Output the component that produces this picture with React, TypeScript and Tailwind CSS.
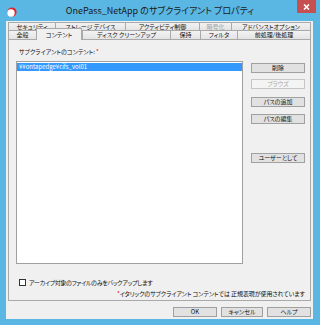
import React from "react";

const FONT = "font-['Noto_Sans_CJK_JP',sans-serif] [font-feature-settings:'palt']";

function Tab({ w, label, disabled, selected, last }: { w: number; label: string; disabled?: boolean; selected?: boolean; last?: boolean }) {
  const base =
    "flex items-center justify-center text-[6px] leading-none border-t border-l border-[#a9a9a9] whitespace-nowrap overflow-hidden";
  const cls = selected
    ? `${base} relative z-10 -mt-[2px] -mb-[1px] bg-[#f0f0f0] border-r`
    : `${base} bg-gradient-to-b from-[#f2f2f2] to-[#e4e4e4] ${last ? "border-r" : ""}`;
  return (
    <div className={cls} style={{ width: w }}>
      <span className={disabled ? "text-[#a3a3a3]" : "text-[#111]"}>{label}</span>
    </div>
  );
}

function Btn({ label, disabled, className = "" }: { label: string; disabled?: boolean; className?: string }) {
  return (
    <div
      className={`h-[10px] flex items-center justify-center text-[6px] leading-none border ${
        disabled ? "bg-[#f4f4f4] border-[#c6c6c6] text-[#a8a8a8]" : "bg-[#e1e1e1] border-[#a0a0a0] text-[#111]"
      } ${className}`}
    >
      {label}
    </div>
  );
}

export default function App() {
  return (
    <div className={`w-[320px] h-[325px] bg-[#5ab6e2] flex flex-col ${FONT}`}>
      {/* title bar */}
      <div className="h-[21px] flex items-start">
        <div className="w-[24px] h-[21px] flex items-center pl-[7px] pt-[3px]">
          <svg width="10" height="10" viewBox="0 0 10 10">
            <circle cx="5" cy="5" r="4.6" fill="#e0262b" />
            <circle cx="4" cy="6" r="3.7" fill="#ffffff" />
          </svg>
        </div>
        <div className="flex-1 h-[21px] flex items-center justify-center text-[9px] leading-none text-[#1a1a1a] whitespace-nowrap">
          OnePass_NetApp のサブクライアント プロパティ
        </div>
        <div className="w-[24px] flex">
          <div className="w-[19px] h-[13px] bg-[#c74f4f] flex items-center justify-center ml-[1px]">
            <svg width="7" height="6" viewBox="0 0 7 6">
              <path d="M1 0.5 L6 5.5 M6 0.5 L1 5.5" stroke="#fff" strokeWidth="1.6" />
            </svg>
          </div>
        </div>
      </div>

      {/* body */}
      <div className="flex-1 ml-[6px] mr-[7px] mb-[6px] bg-[#f0f0f0] flex flex-col pl-[2px] pr-[2px] pt-[1px]">
        {/* tab row 1 */}
        <div className="flex h-[8px]">
          <Tab w={47} label="セキュリティ" />
          <Tab w={70} label="ストレージ デバイス" />
          <Tab w={74} label="アクティビティ制御" />
          <Tab w={32} label="暗号化" disabled />
          <Tab w={80} label="アドバンストオプション" last />
        </div>
        {/* tab row 2 */}
        <div className="flex h-[9px]">
          <Tab w={28} label="全般" />
          <Tab w={46} label="コンテント" selected />
          <Tab w={88} label="ディスク クリーンアップ" />
          <Tab w={30} label="保持" />
          <Tab w={37} label="フィルタ" />
          <Tab w={74} label="前処理/後処理" last />
        </div>

        {/* panel */}
        <div className="h-[262px] border border-[#a9a9a9] bg-[#f0f0f0] flex flex-col pl-[7px] pr-[5px] pt-[7px]">
          <div className="h-[10px] flex items-center ml-[3px] text-[6px] leading-none text-[#111] whitespace-nowrap">
            サブクライアントのコンテント:<span className="text-[#e0141e] ml-[1px]">*</span>
          </div>
          <div className="mt-[4px] flex">
            <div className="w-[227px] h-[203px] bg-white border border-[#a0a0a0] pt-[1px]">
              <div className="h-[8px] bg-[#3399ff] text-white text-[6px] leading-none flex items-center pl-[2px] whitespace-nowrap">
                ¥¥ontapedge¥cifs_vol01
              </div>
            </div>
            <div className="ml-[8px] w-[54px] flex flex-col pt-[2px]">
              <Btn label="削除" />
              <Btn label="ブラウズ" disabled className="mt-[6px]" />
              <Btn label="パスの追加" className="mt-[8px]" />
              <Btn label="パスの編集" className="mt-[7px]" />
              <Btn label="ユーザーとして" className="mt-[29px]" />
            </div>
          </div>
          <div className="mt-[14px] h-[9px] flex items-center ml-[3px]">
            <div className="w-[7px] h-[7px] border border-[#333] bg-white" />
            <span className="ml-[3px] text-[6px] leading-none tracking-[-0.3px] text-[#111] whitespace-nowrap">
              アーカイブ対象のファイルのみをバックアップします
            </span>
          </div>
          <div className="mt-[2px] h-[9px] flex items-center justify-end text-[6px] leading-none tracking-[-0.1px] text-[#111] whitespace-nowrap">
            <span className="text-[#e0141e]">*</span>イタリックのサブクライアント コンテントでは 正規表現が使用されています
          </div>
        </div>

        {/* bottom buttons */}
        <div className="mt-[6px] flex justify-end gap-[4px]">
          <Btn label="OK" className="w-[44px]" />
          <Btn label="キャンセル" className="w-[42px]" />
          <Btn label="ヘルプ" className="w-[44px]" />
        </div>
      </div>
    </div>
  );
}
